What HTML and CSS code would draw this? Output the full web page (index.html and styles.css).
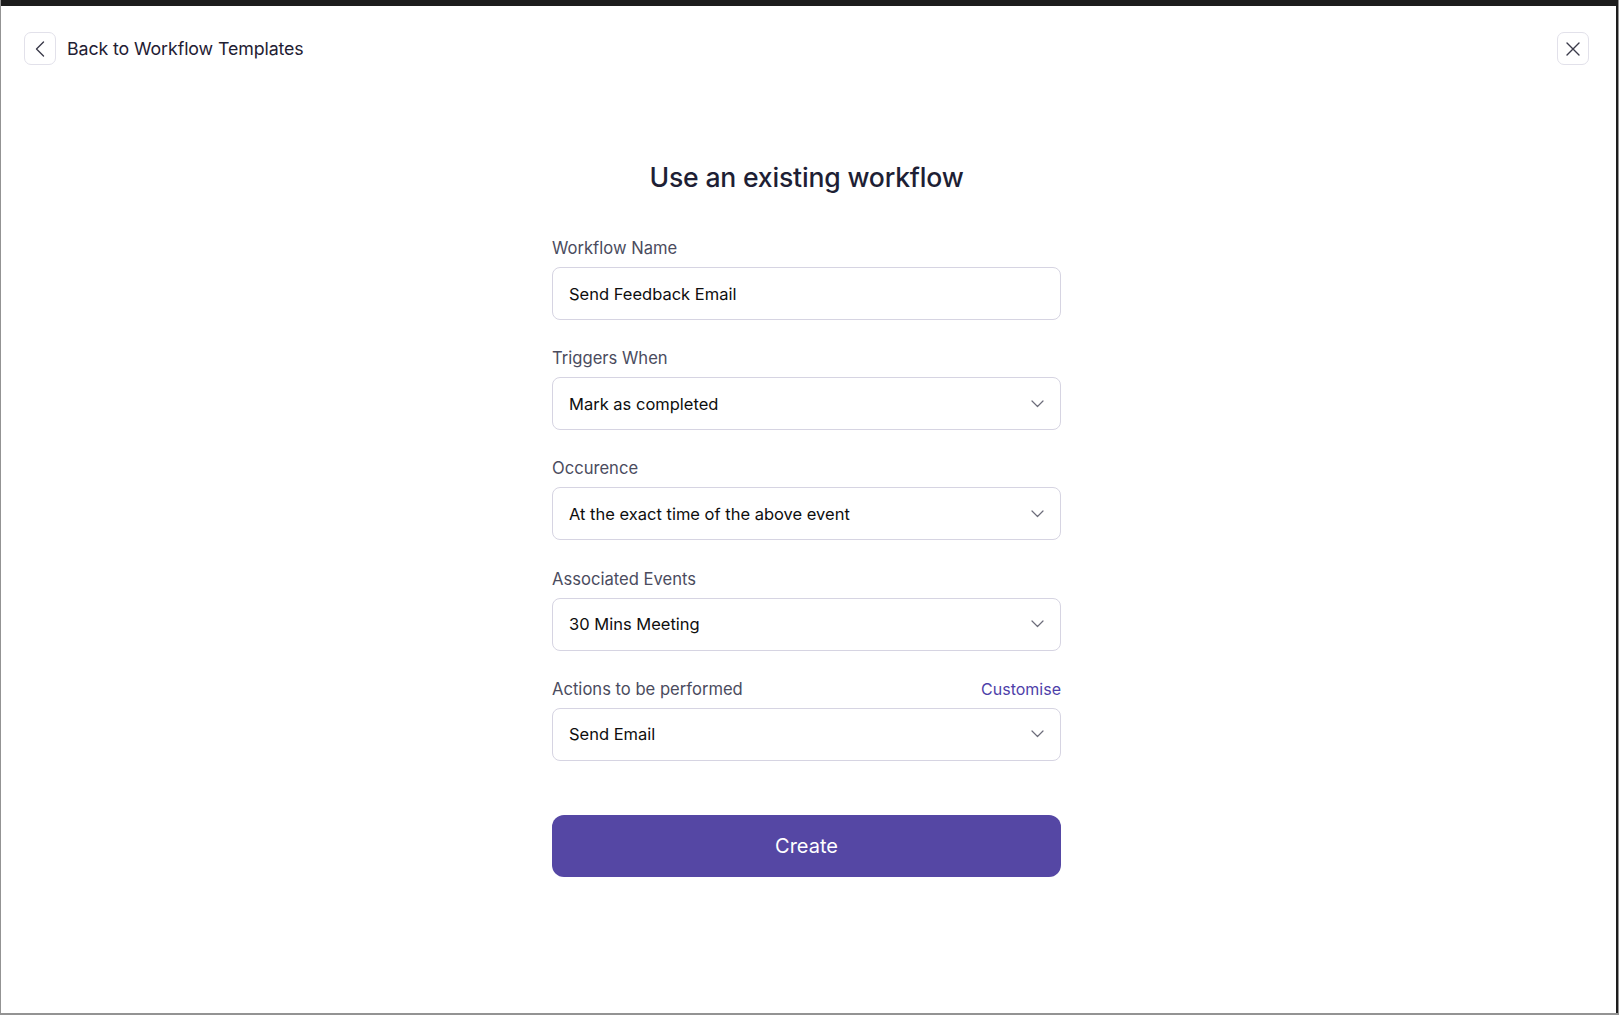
FILE: index.html
```html
<!DOCTYPE html>
<html lang="en">
<head>
<meta charset="utf-8">
<title>Use an existing workflow</title>
<link rel="stylesheet" href="styles.css">
</head>
<body>
<div class="screen">
  <header class="topbar">
    <div class="back">
      <button class="icon-btn" aria-label="Back">
        <svg width="10" height="16" viewBox="0 0 10 16"><path d="M8.5 1 L1.5 8 L8.5 15" fill="none" stroke="#3b3b4a" stroke-width="1.4" stroke-linecap="round" stroke-linejoin="round"/></svg>
      </button>
      <span class="back-text">Back to Workflow Templates</span>
    </div>
    <button class="icon-btn" aria-label="Close">
      <svg width="14" height="14" viewBox="0 0 14 14"><path d="M1 1 L13 13 M13 1 L1 13" fill="none" stroke="#3b3b4a" stroke-width="1.4" stroke-linecap="round"/></svg>
    </button>
  </header>

  <main class="main">
    <form class="form">
      <h1 class="title">Use an existing workflow</h1>

      <div class="field">
        <div class="label-row"><label class="label">Workflow Name</label></div>
        <div class="box"><span class="value">Send Feedback Email</span></div>
      </div>

      <div class="field">
        <div class="label-row"><label class="label">Triggers When</label></div>
        <div class="box"><span class="value">Mark as completed</span>
          <svg class="chev" width="13" height="8" viewBox="0 0 13 8"><path d="M1 1 L6.5 6.5 L12 1" fill="none" stroke="#6c6c7a" stroke-width="1.2" stroke-linecap="round" stroke-linejoin="round"/></svg>
        </div>
      </div>

      <div class="field">
        <div class="label-row"><label class="label">Occurence</label></div>
        <div class="box"><span class="value">At the exact time of the above event</span>
          <svg class="chev" width="13" height="8" viewBox="0 0 13 8"><path d="M1 1 L6.5 6.5 L12 1" fill="none" stroke="#6c6c7a" stroke-width="1.2" stroke-linecap="round" stroke-linejoin="round"/></svg>
        </div>
      </div>

      <div class="field">
        <div class="label-row"><label class="label">Associated Events</label></div>
        <div class="box"><span class="value">30 Mins Meeting</span>
          <svg class="chev" width="13" height="8" viewBox="0 0 13 8"><path d="M1 1 L6.5 6.5 L12 1" fill="none" stroke="#6c6c7a" stroke-width="1.2" stroke-linecap="round" stroke-linejoin="round"/></svg>
        </div>
      </div>

      <div class="field">
        <div class="label-row"><label class="label">Actions to be performed</label><a class="link">Customise</a></div>
        <div class="box"><span class="value">Send Email</span>
          <svg class="chev" width="13" height="8" viewBox="0 0 13 8"><path d="M1 1 L6.5 6.5 L12 1" fill="none" stroke="#6c6c7a" stroke-width="1.2" stroke-linecap="round" stroke-linejoin="round"/></svg>
        </div>
      </div>

      <button type="button" class="create">Create</button>
    </form>
  </main>
</div>
</body>
</html>
```

FILE: styles.css
```css
html, body {
  margin: 0;
  padding: 0;
  background: #939393;
}
body {
  font-family: Inter, "Noto Sans", "Liberation Sans", sans-serif;
  width: 1619px;
  height: 1015px;
  overflow: hidden;
}
.screen {
  box-sizing: border-box;
  margin-left: 1px;
  width: 1617px;
  height: 1013px;
  background: #ffffff;
  border-top: 6px solid #1d1d1d;
  border-right: 2px solid #1d1d1d;
  display: flex;
  flex-direction: column;
}
.topbar {
  display: flex;
  justify-content: space-between;
  align-items: center;
  padding: 26px 27px 0 23px;
}
.back {
  display: flex;
  align-items: center;
  gap: 11px;
}
.icon-btn {
  width: 32px;
  height: 33px;
  box-sizing: border-box;
  border: 1px solid #e2e1ea;
  border-radius: 7px;
  background: #fff;
  display: flex;
  align-items: center;
  justify-content: center;
  padding: 0;
}
.back-text {
  font-size: 17.8px;
  color: #1f2033;
  letter-spacing: -0.1px;
}
.main {
  display: flex;
  justify-content: center;
  padding-right: 4px;
}
.form {
  width: 509px;
  display: flex;
  flex-direction: column;
  margin: 0;
}
.title {
  margin: 95.5px 0 45.5px;
  font-size: 26.6px;
  line-height: 32px;
  font-weight: 500;
  color: #1e1f35;
  text-align: center;
  letter-spacing: -0.2px;
}
.field {
  display: flex;
  flex-direction: column;
  gap: 9px;
  margin-bottom: 28.2px;
}
.label-row {
  display: flex;
  justify-content: space-between;
  align-items: center;
  height: 20px;
}
.label {
  font-size: 16.6px;
  line-height: 20px;
  color: #4b4c5e;
}
.link {
  font-size: 16px;
  line-height: 20px;
  color: #4e3fa9;
}
.box {
  box-sizing: border-box;
  height: 53px;
  border: 1px solid #d6d4e2;
  border-radius: 8px;
  display: flex;
  align-items: center;
  justify-content: space-between;
  padding: 0 16px 0 16px;
}
.value {
  font-size: 16.5px;
  color: #0e0e0e;
}
.chev {
  display: block;
}
.create {
  margin-top: 26px;
  height: 62px;
  border: none;
  border-radius: 12px;
  background: #5547a4;
  color: #ffffff;
  font-family: Inter, "Noto Sans", "Liberation Sans", sans-serif;
  font-size: 20px;
  font-weight: 400;
}
```
